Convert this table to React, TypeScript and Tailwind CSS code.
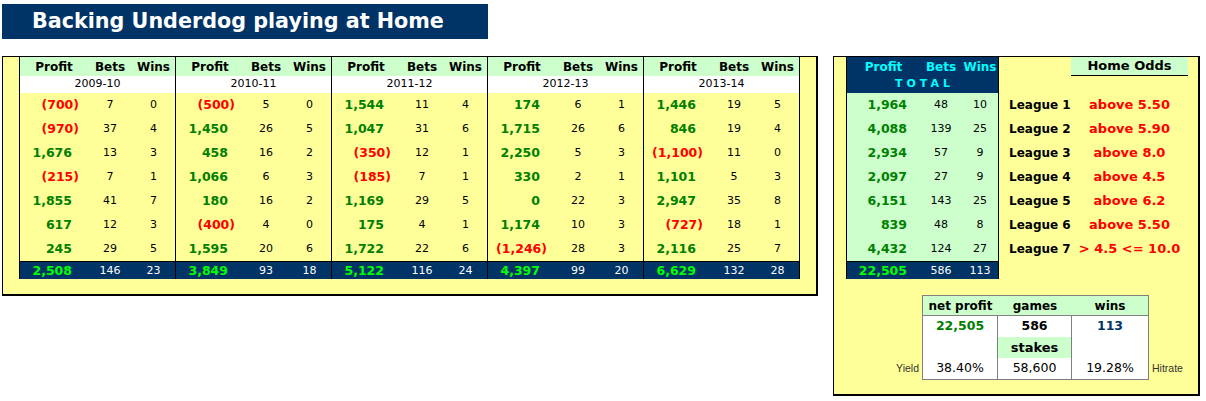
import React from "react";

type Row = [number, number, number];

interface Season {
  year: string;
  rows: Row[];
  total: Row;
}

const seasons: Season[] = [
  {
    year: "2009-10",
    rows: [[-700, 7, 0], [-970, 37, 4], [1676, 13, 3], [-215, 7, 1], [1855, 41, 7], [617, 12, 3], [245, 29, 5]],
    total: [2508, 146, 23],
  },
  {
    year: "2010-11",
    rows: [[-500, 5, 0], [1450, 26, 5], [458, 16, 2], [1066, 6, 3], [180, 16, 2], [-400, 4, 0], [1595, 20, 6]],
    total: [3849, 93, 18],
  },
  {
    year: "2011-12",
    rows: [[1544, 11, 4], [1047, 31, 6], [-350, 12, 1], [-185, 7, 1], [1169, 29, 5], [175, 4, 1], [1722, 22, 6]],
    total: [5122, 116, 24],
  },
  {
    year: "2012-13",
    rows: [[174, 6, 1], [1715, 26, 6], [2250, 5, 3], [330, 2, 1], [0, 22, 3], [1174, 10, 3], [-1246, 28, 3]],
    total: [4397, 99, 20],
  },
  {
    year: "2013-14",
    rows: [[1446, 19, 5], [846, 19, 4], [-1100, 11, 0], [1101, 5, 3], [2947, 35, 8], [-727, 18, 1], [2116, 25, 7]],
    total: [6629, 132, 28],
  },
];

const totals: Row[] = [
  [1964, 48, 10],
  [4088, 139, 25],
  [2934, 57, 9],
  [2097, 27, 9],
  [6151, 143, 25],
  [839, 48, 8],
  [4432, 124, 27],
];

const odds = ["above 5.50", "above 5.90", "above 8.0", "above 4.5", "above 6.2", "above 5.50", "> 4.5 <= 10.0"];

function fmt(n: number) {
  const s = Math.abs(n).toLocaleString("en-US");
  return n < 0 ? `(${s})` : s;
}

function SeasonBlock({ s }: { s: Season }) {
  return (
    <div className="w-[156px] border-r border-black flex flex-col">
      {/* header */}
      <div className="h-[19px] bg-[#ccffcc] grid grid-cols-[68px_44px_43px] items-center font-bold text-[12px] text-black">
        <span className="text-center">Profit</span>
        <span className="text-center">Bets</span>
        <span className="text-center">Wins</span>
      </div>
      <div className="h-[17px] bg-white flex items-center justify-center text-[11px] text-black">{s.year}</div>

      {s.rows.map((r, i) => (
        <div key={i} className="h-[24px] grid grid-cols-[68px_44px_43px] items-center text-[11px] text-black">
          {r[0] < 0 ? (
            <span className="text-right pr-[9px] font-bold text-[12.5px] text-[#ff0000]">{fmt(r[0])}</span>
          ) : (
            <span className="text-right pr-[16px] font-bold text-[12.5px] text-[#008000]">{fmt(r[0])}</span>
          )}
          <span className="text-center">{r[1]}</span>
          <span className="text-center">{r[2]}</span>
        </div>
      ))}

      {/* season total */}
      <div className="h-[18px] bg-[#003366] border-t border-black grid grid-cols-[68px_44px_43px] items-center text-[11px] text-white">
        <span className="text-right pr-[16px] font-bold text-[12.5px] text-[#00ff00]">{fmt(s.total[0])}</span>
        <span className="text-center">{s.total[1]}</span>
        <span className="text-center">{s.total[2]}</span>
      </div>
    </div>
  );
}

export default function App() {
  return (
    <div className="w-[1206px] h-[401px] bg-white overflow-hidden font-['DejaVu_Sans',sans-serif]">
      {/* Title */}
      <div className="ml-[2px] mt-[4px] w-[486px] h-[35px] bg-[#003366] flex items-center pl-[30px]">
        <span className="text-white font-bold text-[20.7px] leading-none">Backing Underdog playing at Home</span>
      </div>

      <div className="flex items-start mt-[17px]">
        {/* Seasons panel */}
        <div className="ml-[2px] w-[816px] h-[240px] bg-[#ffff99] border-l border-t border-r-2 border-b-2 border-black pl-[16px]">
          <div className="flex w-[781px] border-l border-black">
            {seasons.map((s) => (
              <SeasonBlock key={s.year} s={s} />
            ))}
          </div>
        </div>

        {/* Totals panel */}
        <div className="ml-[15px] w-[367px] h-[340px] bg-[#ffff99] border-l border-t border-r-2 border-b-2 border-black flex flex-col">
          <div className="flex pl-[12px]">
            {/* total table */}
            <div className="w-[153px] border-l border-r border-black flex flex-col">
              <div className="h-[19px] bg-[#003366] grid grid-cols-[73px_42px_36px] items-center font-bold text-[12px] text-[#00ffff]">
                <span className="text-center">Profit</span>
                <span className="text-center">Bets</span>
                <span className="text-center">Wins</span>
              </div>
              <div className="h-[17px] bg-[#003366] flex items-center justify-center font-bold text-[11px] text-[#00ffff] tracking-[4px] pl-[4px]">
                TOTAL
              </div>
              {totals.map((r, i) => (
                <div key={i} className="h-[24px] bg-[#ccffcc] grid grid-cols-[73px_42px_36px] items-center text-[11px] text-black">
                  <span className="text-right pr-[13px] font-bold text-[12.5px] text-[#008000]">{fmt(r[0])}</span>
                  <span className="text-center">{r[1]}</span>
                  <span className="text-center">{r[2]}</span>
                </div>
              ))}
              <div className="h-[18px] bg-[#003366] border-t border-black grid grid-cols-[73px_42px_36px] items-center text-[11px] text-white">
                <span className="text-right pr-[13px] font-bold text-[12.5px] text-[#00ff00]">22,505</span>
                <span className="text-center">586</span>
                <span className="text-center">113</span>
              </div>
            </div>

            {/* leagues */}
            <div className="flex flex-col">
              <div className="h-[19px] flex">
                <div className="w-[72px]" />
                <div className="w-[117px] bg-[#ccffcc] border-b border-black flex items-center justify-center font-bold text-[13px] text-black">
                  Home Odds
                </div>
              </div>
              <div className="h-[17px]" />
              {odds.map((o, i) => (
                <div key={i} className="h-[24px] grid grid-cols-[72px_117px] items-center font-bold">
                  <span className="pl-[10px] text-[12px] text-black">League {i + 1}</span>
                  <span className="text-center text-[13px] text-[#ff0000]">{o}</span>
                </div>
              ))}
            </div>
          </div>

          {/* summary */}
          <div className="flex mt-[16px]">
            <div className="w-[88px] flex flex-col justify-end pb-[1px]">
              <div className="h-[21px] flex items-center justify-end pr-[3px] font-['Liberation_Sans',sans-serif] text-[10.5px] text-[#333333]">
                Yield
              </div>
            </div>
            <div className="w-[227px] border border-[#808080] bg-white flex flex-col text-black">
              <div className="h-[20px] bg-[#ccffcc] border-b border-[#808080] grid grid-cols-[75px_74px_76px] items-center font-bold text-[12px]">
                <span className="text-center">net profit</span>
                <span className="text-center">games</span>
                <span className="text-center">wins</span>
              </div>
              <div className="h-[21px] grid grid-cols-[75px_74px_76px] font-bold text-[12.5px]">
                <span className="border-r border-[#808080] flex items-center justify-center text-[#008000]">22,505</span>
                <span className="border-r border-[#808080] flex items-center justify-center">586</span>
                <span className="flex items-center justify-center text-[#003366]">113</span>
              </div>
              <div className="h-[21px] grid grid-cols-[75px_74px_76px] font-bold text-[13px]">
                <span className="border-r border-[#808080]" />
                <span className="border-r border-[#808080] bg-[#ccffcc] flex items-center justify-center">stakes</span>
                <span />
              </div>
              <div className="h-[21px] grid grid-cols-[75px_74px_76px] text-[12.5px]">
                <span className="border-r border-[#808080] flex items-center justify-center">38.40%</span>
                <span className="border-r border-[#808080] flex items-center justify-center">58,600</span>
                <span className="flex items-center justify-center">19.28%</span>
              </div>
            </div>
            <div className="flex flex-col justify-end pb-[1px]">
              <div className="h-[21px] flex items-center pl-[3px] font-['Liberation_Sans',sans-serif] text-[10.5px] text-[#333333]">
                Hitrate
              </div>
            </div>
          </div>
        </div>
      </div>
    </div>
  );
}
